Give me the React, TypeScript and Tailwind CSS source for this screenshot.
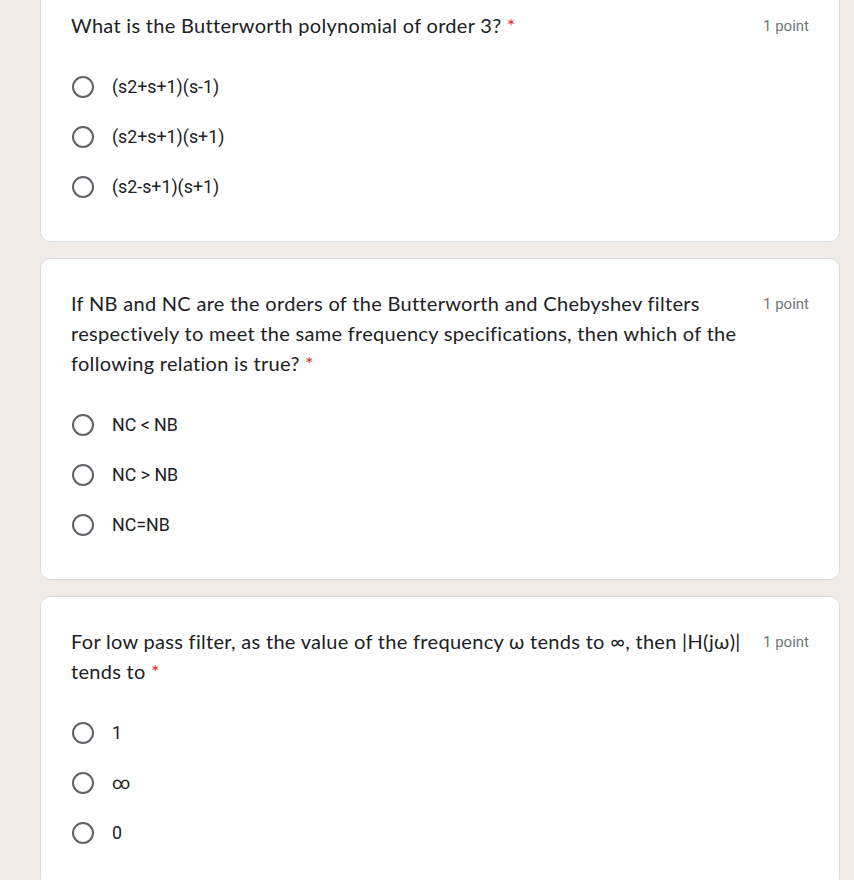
const questions = [
  {
    title: 'What is the Butterworth polynomial of order 3?',
    options: ['(s2+s+1)(s-1)', '(s2+s+1)(s+1)', '(s2-s+1)(s+1)'],
  },
  {
    title:
      'If NB and NC are the orders of the Butterworth and Chebyshev filters respectively to meet the same frequency specifications, then which of the following relation is true?',
    options: ['NC < NB', 'NC > NB', 'NC=NB'],
  },
  {
    title:
      'For low pass filter, as the value of the frequency \u03c9 tends to \u221e, then |H(j\u03c9)| tends to',
    options: ['1', '\u221e', '0'],
  },
];

function Radio() {
  return <div className="h-[22px] w-[22px] shrink-0 rounded-full border-2 border-[#5f6368]" />;
}

function QuestionCard({ title, options }: { title: string; options: string[] }) {
  return (
    <div className="rounded-[10px] border border-[#dadce0] bg-white px-[30px] py-[29px]">
      <div className="flex items-start">
        <div className="flex-1 font-['Lato',sans-serif] text-[20px] leading-[30px] tracking-[0.3px] text-[#202124]">
          {title}
          <span className="text-[#d93025]"> *</span>
        </div>
        <div className="shrink-0 pl-[20px] pt-[2px] font-['Roboto',sans-serif] text-[15px] leading-[28px] text-[#70757a]">
          1 point
        </div>
      </div>
      <div className="mt-[22px] flex flex-col">
        {options.map((o) => (
          <label key={o} className="flex h-[50px] items-center gap-[18px] pl-[1px]">
            <Radio />
            <span className="font-['Roboto',sans-serif] text-[17.8px] text-[#202124]">{o}</span>
          </label>
        ))}
      </div>
    </div>
  );
}

export default function App() {
  return (
    <div className="min-h-[880px] overflow-hidden bg-[#f0ebe6] px-[40px]">
      <div className="-mt-[20px] flex w-[800px] flex-col gap-[16px]">
        {questions.map((q) => (
          <QuestionCard key={q.title} title={q.title} options={q.options} />
        ))}
      </div>
    </div>
  );
}
